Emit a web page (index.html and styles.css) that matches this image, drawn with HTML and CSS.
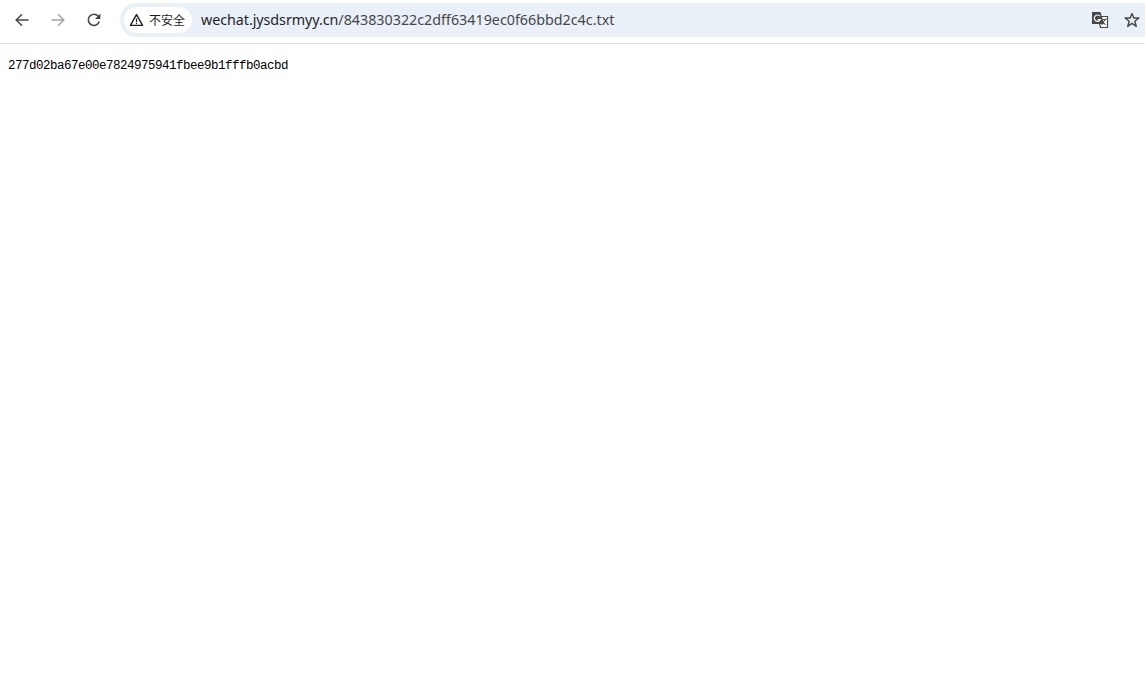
FILE: index.html
```html
<!DOCTYPE html>
<html lang="en">
<head>
    <meta charset="UTF-8">
    <meta name="viewport" content="width=device-width, initial-scale=1.0">
    <title>843830322c2dff63419ec0f66bbd2c4c.txt</title>
    <link rel="stylesheet" href="styles.css">
</head>
<body>
    <div class="toolbar">
        <div class="nav-buttons">
            <span class="nav-button">
                <svg width="16" height="16" viewBox="0 0 16 16"><path d="M14.5 8H2.5M8 2.2 2.2 8 8 13.8" fill="none" stroke="#474747" stroke-width="1.5"/></svg>
            </span>
            <span class="nav-button">
                <svg width="16" height="16" viewBox="0 0 16 16"><path d="M1.5 8H13.5M8 2.2 13.8 8 8 13.8" fill="none" stroke="#a3a3a3" stroke-width="1.5"/></svg>
            </span>
            <span class="nav-button">
                <svg width="16" height="16" viewBox="0 0 16 16"><path d="M13.3 9.5A5.6 5.6 0 1 1 12.2 4.2L13.6 5.8" fill="none" stroke="#474747" stroke-width="1.6"/><path d="M14.4 1.6V7H9z" fill="#474747"/></svg>
            </span>
        </div>
        <div class="omnibox">
            <div class="security-chip">
                <svg width="15" height="14" viewBox="0 0 15 14"><path d="M7.5 1.6 13.6 12.4H1.4z" fill="none" stroke="#1f1f1f" stroke-width="1.4" stroke-linejoin="round"/><path d="M7.5 5.4V9M7.5 9.8V11" stroke="#1f1f1f" stroke-width="1.2"/></svg>
                <span>不安全</span>
            </div>
            <div class="url"><span class="host">wechat.jysdsrmyy.cn</span>/843830322c2dff63419ec0f66bbd2c4c.txt</div>
            <div class="omnibox-actions">
                <svg width="18" height="18" viewBox="0 0 18 18">
                    <path d="M7 5.5H16.5V16.5H9.5z" fill="#fff" stroke="#474747" stroke-width="1.2"/>
                    <path d="M1 1H9.5L13 13H1z" fill="#474747"/>
                    <path d="M9.6 7.5 14.5 14M14.6 7.5 10.8 14M9.4 8.6H15.4" stroke="#474747" fill="none" stroke-width="1"/>
                    <path d="M9 5.2A3.2 3.2 0 1 0 9.4 8.6H6.8" fill="none" stroke="#fff" stroke-width="1.2"/>
                </svg>
                <svg width="16" height="16" viewBox="0 0 16 16"><path d="M8 1.6 9.8 6H14.9L10.8 9.2 12.3 14.4 8 11.4 3.7 14.4 5.2 9.2 1.1 6H6.2z" fill="none" stroke="#474747" stroke-width="1.4" stroke-linejoin="round"/></svg>
            </div>
        </div>
    </div>
    <pre class="file-text">277d02ba67e00e7824975941fbee9b1fffb0acbd</pre>
</body>
</html>
```

FILE: styles.css
```css
body {
    margin: 0;
    background-color: #fff;
    font-family: "Noto Sans", "Noto Sans CJK SC", sans-serif;
}

.toolbar {
    height: 44px;
    box-sizing: border-box;
    padding: 3px 0 6px 4px;
    border-bottom: 1px solid #e1e1e1;
    display: flex;
    gap: 8px;
}

.nav-buttons {
    display: flex;
    align-items: center;
}

.nav-button {
    width: 36px;
    height: 34px;
    display: flex;
    justify-content: center;
    align-items: center;
}

.omnibox {
    flex: 1;
    height: 34px;
    background-color: #e9f0f8;
    border-radius: 17px 0 0 17px;
    display: flex;
    align-items: center;
    padding-left: 4px;
}

.security-chip {
    width: 68px;
    height: 26px;
    box-sizing: border-box;
    padding-left: 5px;
    background-color: #fff;
    border-radius: 13px;
    display: flex;
    align-items: center;
    gap: 5px;
    font-size: 12px;
    color: #1f1f1f;
}

.url {
    margin-left: 9px;
    padding-bottom: 2px;
    font-size: 14.3px;
    color: #474747;
    white-space: nowrap;
}

.host {
    color: #1f1f1f;
    letter-spacing: -0.05px;
}

.omnibox-actions {
    margin-left: auto;
    padding-right: 5px;
    display: flex;
    align-items: center;
    gap: 15px;
}

.file-text {
    margin: 15px 8px 0;
    font-family: "Liberation Mono", monospace;
    font-size: 12.5px;
    letter-spacing: -0.5px;
    line-height: 15px;
    color: #000;
}
```
